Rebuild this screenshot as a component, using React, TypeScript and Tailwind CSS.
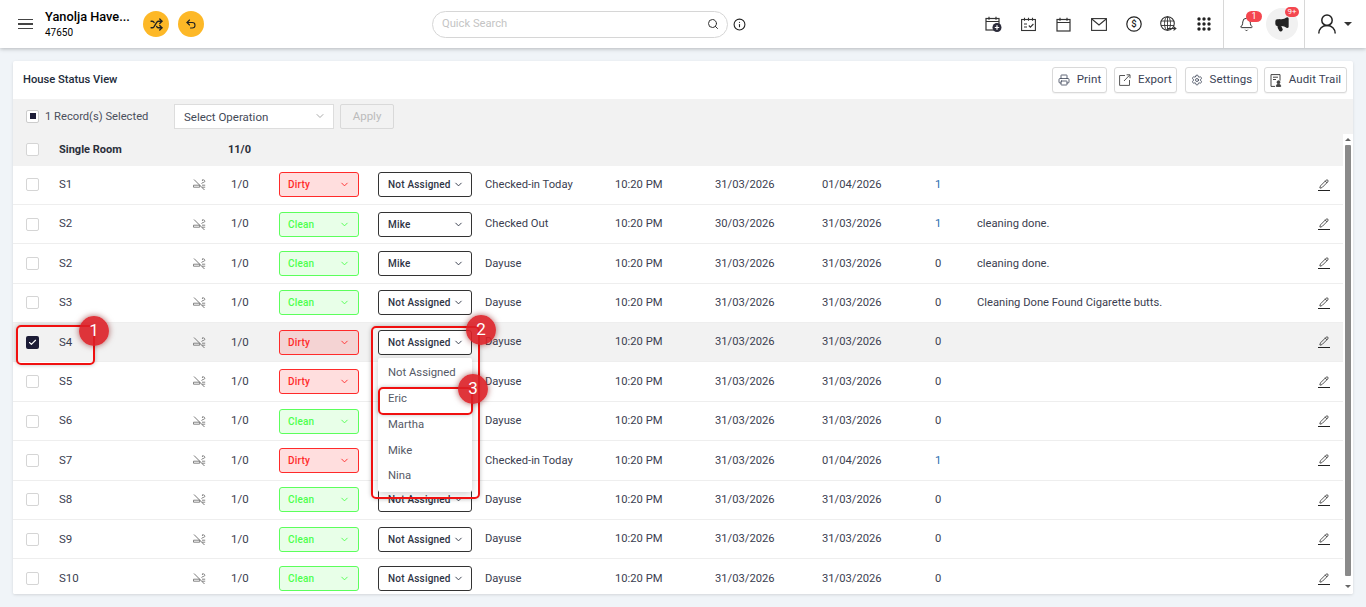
import React from 'react';
import {
  Bell,
  Check,
  ChevronDown,
  Info,
  Megaphone,
  Pencil,
  Printer,
  Search,
  Settings,
  Shuffle,
  Undo2,
} from 'lucide-react';

type Room = {
  name: string;
  status: 'Dirty' | 'Clean';
  who: string;
  state: string;
  d1: string;
  d2: string;
  n: string;
  note?: string;
};

const rooms: Room[] = [
  { name: 'S1', status: 'Dirty', who: 'Not Assigned', state: 'Checked-in Today', d1: '31/03/2026', d2: '01/04/2026', n: '1' },
  { name: 'S2', status: 'Clean', who: 'Mike', state: 'Checked Out', d1: '30/03/2026', d2: '31/03/2026', n: '1', note: 'cleaning done.' },
  { name: 'S2', status: 'Clean', who: 'Mike', state: 'Dayuse', d1: '31/03/2026', d2: '31/03/2026', n: '0', note: 'cleaning done.' },
  { name: 'S3', status: 'Clean', who: 'Not Assigned', state: 'Dayuse', d1: '31/03/2026', d2: '31/03/2026', n: '0', note: 'Cleaning Done Found Cigarette butts.' },
  { name: 'S4', status: 'Dirty', who: 'Not Assigned', state: 'Dayuse', d1: '31/03/2026', d2: '31/03/2026', n: '0' },
  { name: 'S5', status: 'Dirty', who: 'Not Assigned', state: 'Dayuse', d1: '31/03/2026', d2: '31/03/2026', n: '0' },
  { name: 'S6', status: 'Clean', who: 'Not Assigned', state: 'Dayuse', d1: '31/03/2026', d2: '31/03/2026', n: '0' },
  { name: 'S7', status: 'Dirty', who: 'Not Assigned', state: 'Checked-in Today', d1: '31/03/2026', d2: '01/04/2026', n: '1' },
  { name: 'S8', status: 'Clean', who: 'Not Assigned', state: 'Dayuse', d1: '31/03/2026', d2: '31/03/2026', n: '0' },
  { name: 'S9', status: 'Clean', who: 'Not Assigned', state: 'Dayuse', d1: '31/03/2026', d2: '31/03/2026', n: '0' },
  { name: 'S10', status: 'Clean', who: 'Not Assigned', state: 'Dayuse', d1: '31/03/2026', d2: '31/03/2026', n: '0' },
];

// Icons the packages don't have in this shape
const CalendarBase = () => (
  <>
    <rect x="1" y="2.5" width="13" height="11.5" fill="none" stroke="currentColor" strokeWidth="1.2" />
    <path d="M1 5.5h13M4 0.8v3M11 0.8v3" stroke="currentColor" strokeWidth="1.2" fill="none" />
  </>
);

const CalendarPlusIcon = () => (
  <svg width="17" height="16" viewBox="0 0 17 16" className="text-[#333333]">
    <CalendarBase />
    <circle cx="12" cy="11.5" r="4.5" fill="#2b2b3a" />
    <path d="M12 9.3v4.4M9.8 11.5h4.4" stroke="#ffffff" strokeWidth="1.2" />
  </svg>
);

const CalendarCheckIcon = () => (
  <svg width="15" height="15" viewBox="0 0 15 15" className="text-[#333333]">
    <rect x="0.6" y="2.5" width="13.8" height="11" fill="none" stroke="currentColor" strokeWidth="1.1" />
    <path d="M3.5 0.8v3M7.5 0.8v3M11.5 0.8v3M3 7h3M3 10h3M7.8 8.5l1.6 1.7 3-3.2" stroke="currentColor" strokeWidth="1.1" fill="none" />
  </svg>
);

const CalendarIcon = () => (
  <svg width="15" height="15" viewBox="0 0 15 15" className="text-[#333333]">
    <CalendarBase />
  </svg>
);

const MailIcon = () => (
  <svg width="16" height="13" viewBox="0 0 16 13" className="text-[#333333]">
    <rect x="0.6" y="0.6" width="14.8" height="11.8" fill="none" stroke="currentColor" strokeWidth="1.1" />
    <path d="M0.8 1l7.2 6 7.2-6" fill="none" stroke="currentColor" strokeWidth="1.1" />
  </svg>
);

const DollarIcon = () => (
  <svg width="16" height="16" viewBox="0 0 16 16" className="text-[#222222]">
    <circle cx="8" cy="8" r="7.2" fill="none" stroke="currentColor" strokeWidth="1.2" />
    <text x="8" y="11.4" textAnchor="middle" fontSize="9.5" fontWeight="500" fill="currentColor" fontFamily="Roboto, sans-serif">$</text>
  </svg>
);

const GlobeIcon = () => (
  <svg width="17" height="16" viewBox="0 0 17 16" className="text-[#333333]">
    <circle cx="7.5" cy="7.5" r="6.8" fill="none" stroke="currentColor" strokeWidth="1.1" />
    <ellipse cx="7.5" cy="7.5" rx="3" ry="6.8" fill="none" stroke="currentColor" strokeWidth="0.9" />
    <path d="M7.5 0.7v13.6M1 5h13M1 9.5h13" stroke="currentColor" strokeWidth="0.9" fill="none" />
    <path d="M7 12.5h8.5M13.5 10.6l2.3 1.9-2.3 1.9" stroke="currentColor" strokeWidth="1.2" fill="none" />
  </svg>
);

const GripIcon = () => (
  <svg width="14" height="14" viewBox="0 0 14 14" fill="#222222">
    {[2, 7, 12].map((y) =>
      [2, 7, 12].map((x) => <circle key={`${x}-${y}`} cx={x} cy={y} r="1.7" />),
    )}
  </svg>
);

const UserIcon = () => (
  <svg width="18" height="20" viewBox="0 0 18 20" fill="none" stroke="#222222" strokeWidth="1.5">
    <circle cx="9" cy="6.2" r="5.2" />
    <path d="M0.8 19.5c0-4.8 3.4-8 8.2-8s8.2 3.2 8.2 8" />
  </svg>
);

const ExportIcon = () => (
  <svg width="12" height="12" viewBox="0 0 12 12" fill="none" stroke="#555555" strokeWidth="1">
    <path d="M6 1.5H0.6v9.9h9.9V6M5 7l5.5-5.8M7.6 0.8h3.4v3.4" />
  </svg>
);

const AuditIcon = () => (
  <svg width="12" height="13" viewBox="0 0 12 13" fill="none" stroke="#444444" strokeWidth="1">
    <path d="M5 12.4H1V0.6h9v6M3 3.2h5M3 5.5h3" />
    <circle cx="8.5" cy="8.2" r="1.4" fill="#444444" />
    <path d="M6.3 12.4c0-1.6 1-2.4 2.2-2.4s2.2.8 2.2 2.4z" fill="#444444" />
  </svg>
);

const NoSmokeIcon = () => (
  <svg width="13" height="13" viewBox="0 0 13 13" fill="none" stroke="#777777" strokeWidth="1">
    <path d="M1 1.5l10.5 10.5" />
    <path d="M0.5 7.2h6.2v2h-6.2zM9 7.2h3.2M9 9.2h3.2" strokeWidth="0.9" />
    <path d="M8.5 5.6c0-1.2 3.4-.8 3.4-2.4 0-.8-.8-1.2-1.5-1.2M9.3 3c0-.9.5-1.5 1-2" strokeWidth="0.9" />
  </svg>
);

const ToolButton: React.FC<{ label: string; icon: React.ReactNode; width: string; className?: string }> = ({
  label,
  icon,
  width,
  className,
}) => (
  <button className={`h-[26px] ${width} ${className ?? ''} flex items-center justify-center gap-[7px] bg-white border border-[#d9d9d9] rounded-[3px] text-[11.5px] tracking-[0.1px] text-[#3a4255] shadow-[0_1px_1px_rgba(0,0,0,0.05)]`}>
    {icon}
    {label}
  </button>
);

const Marker: React.FC<{ n: number; className: string }> = ({ n, className }) => (
  <div className={`absolute w-[30px] h-[30px] rounded-full bg-[#dc1f26]/90 text-white text-[17px] flex items-center justify-center shadow-[0_0_6px_rgba(120,0,0,0.6)] ${className}`}>
    {n}
  </div>
);

const Row: React.FC<{ room: Room; selected: boolean }> = ({ room, selected }) => {
  const dirty = room.status === 'Dirty';
  return (
    <div className={`h-[39.4px] shrink-0 flex items-center border-b border-[#eeeeee] text-[11.2px] text-[#3b4050] ${selected ? 'bg-[#f2f2f2]' : 'bg-white'}`}>
      <div className="w-[46px] pl-[13px] shrink-0">
        {selected ? (
          <div className="w-[13px] h-[13px] rounded-[2px] bg-[#1c1c36] flex items-center justify-center">
            <Check size={9} strokeWidth={3} className="text-white" />
          </div>
        ) : (
          <div className="w-[13px] h-[13px] rounded-[2px] border border-[#d5d5d5] bg-white" />
        )}
      </div>
      <div className="w-[134px] shrink-0 text-[11.5px]">{room.name}</div>
      <div className="w-[38px] shrink-0">
        <NoSmokeIcon />
      </div>
      <div className="w-[48px] shrink-0 text-[11.5px]">1/0</div>
      <div className="w-[99px] shrink-0">
        <div className={`w-[80px] h-[25px] flex items-center justify-between px-[8px] rounded-[3px] border text-[10px] font-medium tracking-[0.2px] ${dirty ? 'border-[#ff2a2a] text-[#ff2a2a] bg-[#ff0000]/[0.13]' : 'border-[#5cff5c] text-[#4dff4d] bg-[#00ff00]/[0.09]'}`}>
          {room.status}
          <ChevronDown size={11} />
        </div>
      </div>
      <div className="w-[107px] shrink-0">
        <div className="w-[94px] h-[25px] flex items-center justify-between pl-[9px] pr-[7px] rounded-[3px] border border-[#333333] bg-white text-[10px] font-medium tracking-[0.2px] text-[#2e3445]">
          {room.who}
          <ChevronDown size={11} />
        </div>
      </div>
      <div className="w-[130px] shrink-0 pt-[1px]">{room.state}</div>
      <div className="w-[100px] shrink-0 pt-[1px]">10:20 PM</div>
      <div className="w-[107px] shrink-0 pt-[1px]">{room.d1}</div>
      <div className="w-[113px] shrink-0 pt-[1px]">{room.d2}</div>
      <div className={`w-[42px] shrink-0 pt-[1px] ${room.n === '1' ? 'text-[#2a6fb0]' : ''}`}>{room.n}</div>
      <div className="flex-1 pt-[1px]">{room.note}</div>
      <div className="w-[25px] shrink-0">
        <div className="w-[12px] flex flex-col items-center">
          <Pencil size={10} className="text-[#333333]" />
          <div className="w-[12px] h-px bg-[#222222] mt-px" />
        </div>
      </div>
    </div>
  );
};

const App: React.FC = () => {
  return (
    <div className="relative h-[607px] overflow-hidden bg-[#f0f4f8] font-['Roboto',sans-serif]">
      <header className="relative z-10 h-[48px] bg-white shadow-[0_1px_4px_rgba(0,0,0,0.25)] flex items-center">
        <div className="w-[45px] pl-[18px] shrink-0">
          <div className="w-[15px] flex flex-col gap-[3px]">
            <div className="h-[1.4px] bg-[#444444]" />
            <div className="h-[1.4px] bg-[#444444]" />
            <div className="h-[1.4px] bg-[#444444]" />
          </div>
        </div>
        <div className="w-[98px] shrink-0 text-black">
          <div className="text-[12.8px] font-medium leading-[15px]">Yanolja Have...</div>
          <div className="text-[10px] leading-[13px] mt-[2px]">47650</div>
        </div>
        <div className="w-[26px] h-[26px] rounded-full bg-[#fdb827] flex items-center justify-center">
          <Shuffle size={13} strokeWidth={2.5} className="text-[#222222]" />
        </div>
        <div className="w-[26px] h-[26px] rounded-full bg-[#fdb827] flex items-center justify-center ml-[9px]">
          <Undo2 size={12} strokeWidth={2.2} className="text-[#222222]" />
        </div>
        <div className="ml-[228px] w-[296px] h-[27px] rounded-full border border-[#d6d6d6] flex items-center justify-between pl-[9px] pr-[8px]">
          <span className="text-[11.2px] text-[#c4c4c4]">Quick Search</span>
          <Search size={12} className="text-[#333333]" />
        </div>
        <Info size={13} className="ml-[5px] text-[#222222]" />
        <div className="ml-auto flex items-center h-full">
          <div className="flex items-center pr-[2px]">
            <div className="w-[35px] flex justify-center"><CalendarPlusIcon /></div>
            <div className="w-[35px] flex justify-center"><CalendarCheckIcon /></div>
            <div className="w-[35px] flex justify-center"><CalendarIcon /></div>
            <div className="w-[35px] flex justify-center"><MailIcon /></div>
            <div className="w-[35px] flex justify-center"><DollarIcon /></div>
            <div className="w-[35px] flex justify-center"><GlobeIcon /></div>
            <div className="w-[35px] flex justify-center"><GripIcon /></div>
          </div>
          <div className="h-full w-[82px] border-l border-r border-[#d8d8d8] flex items-center relative">
            <Bell size={15} strokeWidth={1.6} className="ml-[15px] text-[#333333]" />
            <div className="absolute left-[22px] top-[11px] w-[16px] h-[11px] rounded-full bg-[#f4474f] text-white text-[9px] leading-[11px] text-center">1</div>
            <div className="ml-[12px] w-[32px] h-[32px] rounded-full bg-[#f1f1f1] flex items-center justify-center">
              <Megaphone size={16} fill="#222222" className="text-[#222222]" />
            </div>
            <div className="absolute left-[61px] top-[7px] w-[14px] h-[10px] rounded-full bg-[#f4474f] text-white text-[8px] leading-[10px] text-center">9+</div>
          </div>
          <div className="w-[61px] flex items-center pl-[13px]">
            <UserIcon />
            <div className="ml-[8px] w-0 h-0 border-l-[4px] border-r-[4px] border-t-[4px] border-l-transparent border-r-transparent border-t-[#333333]" />
          </div>
        </div>
      </header>

      <main className="absolute left-[13px] top-[61px] w-[1340px] h-[533px] bg-white rounded-[2px] shadow-[0_1px_3px_rgba(0,0,0,0.12)] overflow-hidden flex flex-col">
        <div className="h-[38px] shrink-0 flex items-center justify-between pl-[10px] pr-[6px]">
          <div className="text-[11.2px] font-medium text-[#222b3a]">House Status View</div>
          <div className="flex items-center">
            <ToolButton label="Print" width="w-[55px]" icon={<Printer size={12} strokeWidth={1.6} />} />
            <ToolButton label="Export" width="w-[63px]" className="ml-[7px]" icon={<ExportIcon />} />
            <ToolButton label="Settings" width="w-[73px]" className="ml-[8px]" icon={<Settings size={12} strokeWidth={1.6} />} />
            <ToolButton label="Audit Trail" width="w-[83px]" className="ml-[6px]" icon={<AuditIcon />} />
          </div>
        </div>
        <div className="h-[34.5px] shrink-0 bg-[#f2f2f2] flex items-center pl-[13px]">
          <div className="w-[13px] h-[13px] rounded-[2px] border border-[#cccccc] bg-white flex items-center justify-center">
            <div className="w-[6px] h-[6px] bg-[#1c1c36]" />
          </div>
          <div className="ml-[6px] w-[129px] text-[11.2px] text-[#4a4f5c] pt-[2px]">1 Record(s) Selected</div>
          <div className="w-[160px] h-[25px] bg-white border border-[#dddddd] flex items-center justify-between pl-[9px] pr-[7px] text-[11.5px] text-[#444a58]">
            <span className="pt-[2px]">Select Operation</span>
            <ChevronDown size={12} className="text-[#aaaaaa]" />
          </div>
          <div className="ml-[6px] w-[54px] h-[25px] border border-[#d9d9d9] rounded-[2px] flex items-center justify-center text-[11.5px] text-[#bbbbbb]">
            Apply
          </div>
        </div>
        <div className="flex-1 min-h-0 flex">
          <div className="flex-1 min-w-0 flex flex-col overflow-hidden">
            <div className="h-[32px] shrink-0 bg-[#f2f2f2] flex items-center text-[11px] font-bold text-[#2b2f3a]">
              <div className="w-[46px] pl-[13px] shrink-0">
                <div className="w-[13px] h-[13px] rounded-[2px] border border-[#d5d5d5] bg-white" />
              </div>
              <div className="w-[169px] shrink-0 pt-[1px]">Single Room</div>
              <div className="pt-[1px]">11/0</div>
            </div>
            {rooms.map((room, i) => (
              <Row key={i} room={room} selected={i === 4} />
            ))}
          </div>
          <div className="w-[10px] shrink-0 bg-white relative flex flex-col items-center pt-[4px]">
            <div className="w-0 h-0 border-l-[3px] border-r-[3px] border-b-[3px] border-l-transparent border-r-transparent border-b-[#666666]" />
            <div className="w-[6px] h-[431px] mt-[4px] bg-[#8a8a8a] rounded-[1px]" />
            <div className="mt-[9px] w-0 h-0 border-l-[3px] border-r-[3px] border-t-[3px] border-l-transparent border-r-transparent border-t-[#666666]" />
          </div>
        </div>
      </main>

      {/* dropdown open on the S4 row */}
      <div className="absolute z-20 left-[378px] top-[358px] w-[94px] h-[134px] bg-white rounded-[2px] shadow-[0_2px_8px_rgba(0,0,0,0.2)] text-[11.3px] text-[#555a66] pl-[10px]">
        <div className="h-[25.5px] mt-[3px] flex items-center">Not Assigned</div>
        <div className="h-[25.5px] flex items-center">Eric</div>
        <div className="h-[25.5px] mt-px flex items-center">Martha</div>
        <div className="h-[25.5px] flex items-center">Mike</div>
        <div className="h-[25.5px] flex items-center">Nina</div>
      </div>

      {/* tutorial markers */}
      <div className="absolute z-30 left-[16px] top-[325px] w-[79px] h-[40px] border-2 border-[#f01010] rounded-[5px] shadow-[0_0_4px_rgba(0,0,0,0.25)]" />
      <div className="absolute z-30 left-[371px] top-[326px] w-[109px] h-[173px] border-2 border-[#f01010] rounded-[5px] shadow-[0_0_4px_rgba(0,0,0,0.25)]" />
      <div className="absolute z-30 left-[378px] top-[387px] w-[95px] h-[28px] border-2 border-[#f01010] rounded-[5px] shadow-[0_0_4px_rgba(0,0,0,0.25)]" />
      <Marker n={1} className="z-40 left-[79px] top-[316px]" />
      <Marker n={2} className="z-40 left-[466px] top-[315px]" />
      <Marker n={3} className="z-40 left-[458px] top-[374px]" />
    </div>
  );
};

export default App;
